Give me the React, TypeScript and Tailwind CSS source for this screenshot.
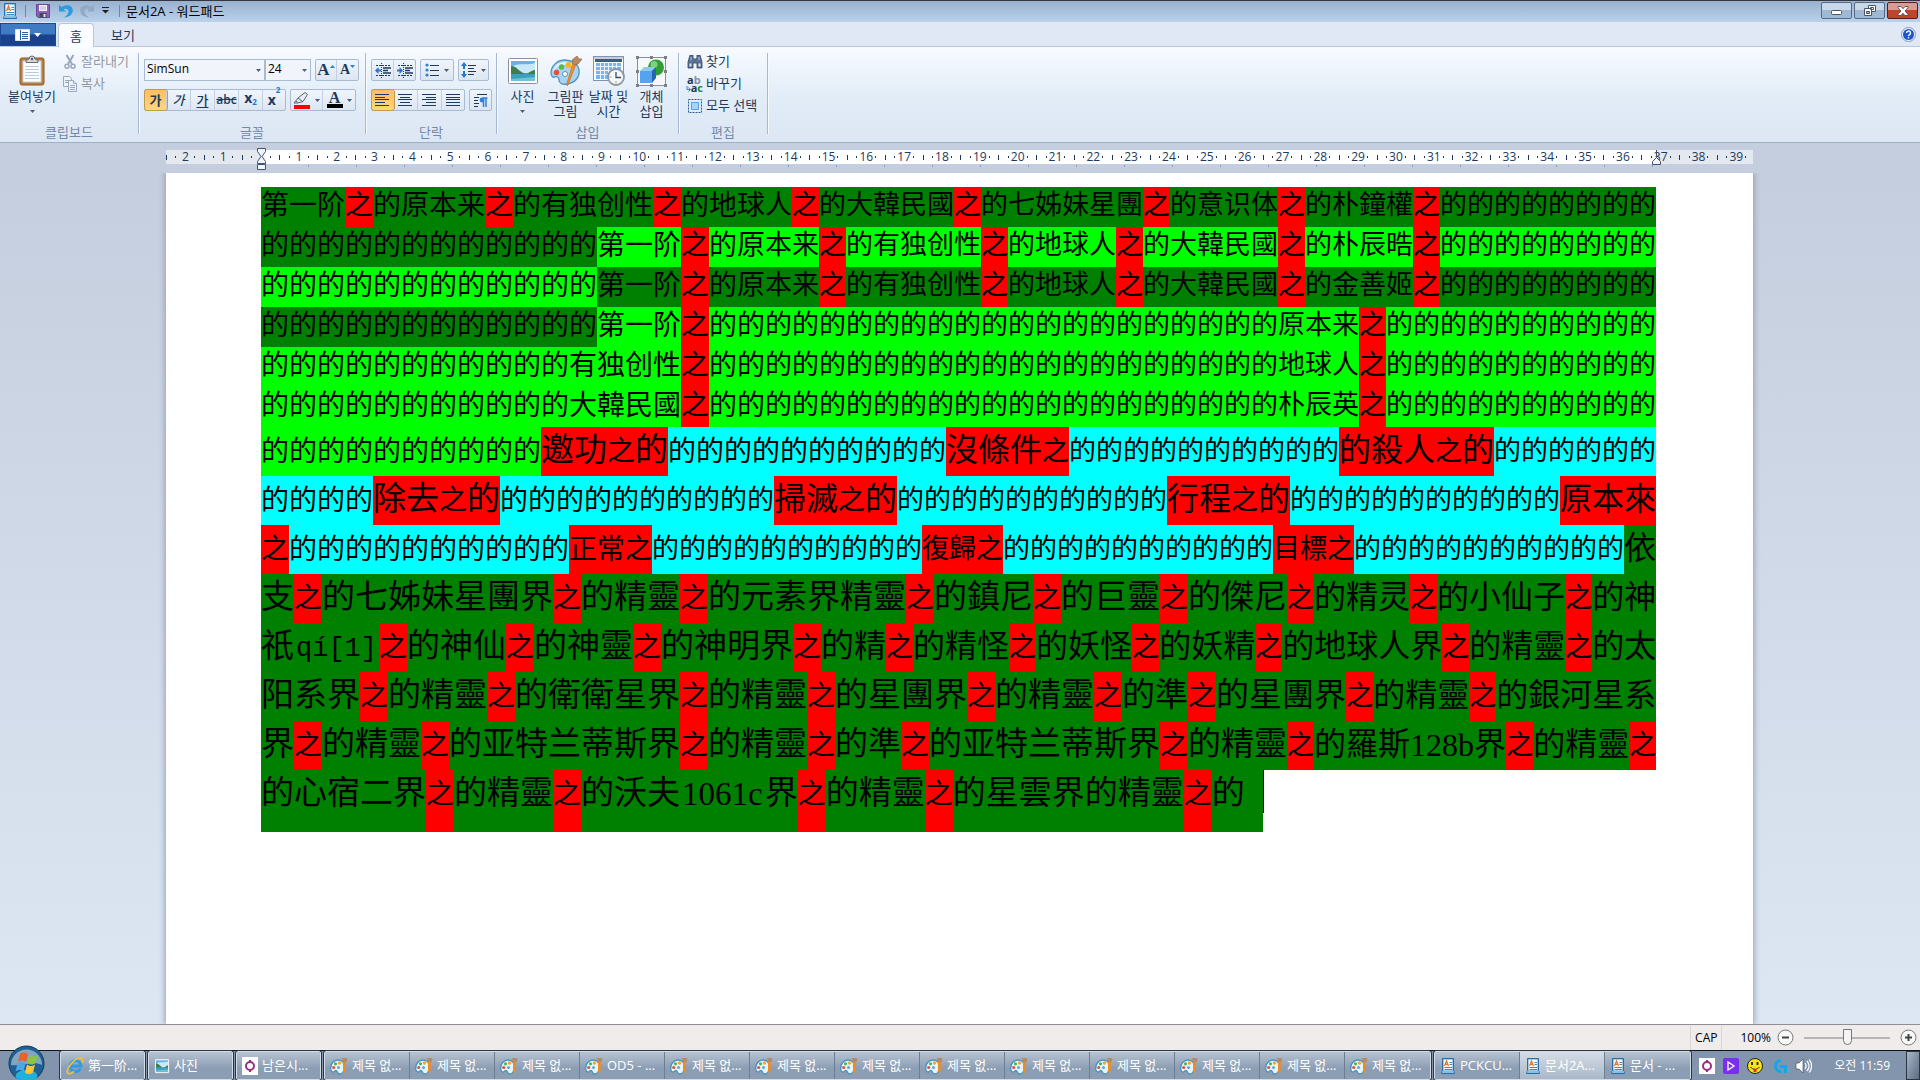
import type { FC, ReactNode } from "react";

type Size = "sm" | "lg";
type Face = "mono" | "serif";

interface Run {
  text: string;
  bg: string;
  size: Size;
  face?: Face;
}

interface Line {
  runs: Run[];
  tall?: boolean;
  last?: boolean;
}

const GREEN = "bg-[#008000]";
const LIME = "bg-[#00ff00]";
const CYAN = "bg-[#00ffff]";
const RED = "bg-[#ff0000]";

const LINE_WIDTH = 1395;

const de = (n: number) => "的".repeat(n);
const sm = (bg: string, text: string): Run => ({ text, bg, size: "sm" });
const lg = (bg: string, text: string): Run => ({ text, bg, size: "lg" });

// every 之 is a small red run, the rest keeps the given colour
const mark = (text: string, bg: string, size: Size = "sm"): Run[] =>
  text
    .split(/(之|qí\[1\]|\d+[a-z])/)
    .filter(Boolean)
    .map((part) => {
      if (part === "之") return sm(RED, part);
      if (part.startsWith("q")) return { text: part, bg, size, face: "mono" as Face };
      if (/^\d/.test(part)) return { text: part, bg, size, face: "serif" as Face };
      return { text: part, bg, size };
    });

const lines: Line[] = [
  { runs: mark(`第一阶之的原本来之的有独创性之的地球人之的大韓民國之的七姊妹星團之的意识体之的朴鐘權之${de(8)}`, GREEN) },
  { runs: [sm(GREEN, de(12)), ...mark(`第一阶之的原本来之的有独创性之的地球人之的大韓民國之的朴辰晧之${de(8)}`, LIME)] },
  { runs: [sm(LIME, de(12)), ...mark(`第一阶之的原本来之的有独创性之的地球人之的大韓民國之的金善姬之${de(8)}`, GREEN)] },
  { runs: [sm(GREEN, de(12)), ...mark(`第一阶之${de(21)}原本来之${de(10)}`, LIME)] },
  { runs: mark(`${de(11)}有独创性之${de(21)}地球人之${de(10)}`, LIME) },
  { runs: mark(`${de(11)}大韓民國之${de(21)}朴辰英之${de(10)}`, LIME) },
  {
    tall: true,
    runs: [
      sm(LIME, de(10)), lg(RED, "邀功"), sm(RED, "之"), lg(RED, "的"),
      sm(CYAN, de(10)), lg(RED, "沒條件"), sm(RED, "之"),
      sm(CYAN, de(10)), lg(RED, "的殺人"), sm(RED, "之"), lg(RED, "的"),
      sm(CYAN, de(6)),
    ],
  },
  {
    tall: true,
    runs: [
      sm(CYAN, de(4)), lg(RED, "除去"), sm(RED, "之"), lg(RED, "的"),
      sm(CYAN, de(10)), lg(RED, "掃滅"), sm(RED, "之"), lg(RED, "的"),
      sm(CYAN, de(10)), lg(RED, "行程"), sm(RED, "之"), lg(RED, "的"),
      sm(CYAN, de(10)), lg(RED, "原本來"),
    ],
  },
  {
    tall: true,
    runs: [
      sm(RED, "之"), sm(CYAN, de(10)), sm(RED, "正常之"), sm(CYAN, de(10)),
      sm(RED, "復歸之"), sm(CYAN, de(10)), sm(RED, "目標之"), sm(CYAN, de(10)), lg(GREEN, "依"),
    ],
  },
  { tall: true, runs: mark("支之的七姊妹星團界之的精靈之的元素界精靈之的鎮尼之的巨靈之的傑尼之的精灵之的小仙子之的神", GREEN, "lg") },
  { tall: true, runs: mark("祇qí[1]之的神仙之的神靈之的神明界之的精之的精怪之的妖怪之的妖精之的地球人界之的精靈之的太", GREEN, "lg") },
  { tall: true, runs: mark("阳系界之的精靈之的衛衛星界之的精靈之的星團界之的精靈之的準之的星團界之的精靈之的銀河星系", GREEN, "lg") },
  { tall: true, runs: mark("界之的精靈之的亚特兰蒂斯界之的精靈之的準之的亚特兰蒂斯界之的精靈之的羅斯128b界之的精靈之", GREEN, "lg") },
  { tall: true, last: true, runs: mark("的心宿二界之的精靈之的沃夫1061c界之的精靈之的星雲界的精靈之的", GREEN, "lg") },
];

const cellWidth = (run: Run) => (run.face ? 16 : run.size === "lg" ? 32 : 27);

// spare pixels of a justified line go one by one to its leading characters
const justify = (line: Line) => {
  const used = line.runs.reduce((sum, run) => sum + run.text.length * cellWidth(run), 0);
  let spare = line.last ? Infinity : Math.max(0, LINE_WIDTH - used);
  const out: (Run & { wide: boolean })[] = [];
  for (const run of line.runs) {
    const n = run.text.length;
    if (spare >= n) out.push({ ...run, wide: true });
    else if (spare <= 0) out.push({ ...run, wide: false });
    else if (run.face) out.push({ ...run, wide: true });
    else {
      out.push({ ...run, text: run.text.slice(0, spare), wide: true });
      out.push({ ...run, text: run.text.slice(spare), wide: false });
    }
    spare -= n;
  }
  return out;
};

const runClass = (run: Run & { wide: boolean }, tall?: boolean) => {
  const drop = tall && run.size === "sm" ? "pt-0.5" : "";
  if (run.face === "mono") return `${run.bg} px-0.5 pt-1.5 font-['Liberation_Mono',monospace] text-[27px]`;
  if (run.face === "serif") {
    return `${run.bg} pt-1 font-['Liberation_Serif',serif] ${run.wide ? "px-0.5 text-[33px]" : "text-[32px]"}`;
  }
  if (run.size === "lg") return `${run.bg} ${run.wide ? "text-[33px]" : "text-[32px]"}`;
  return `${run.bg} ${drop} ${run.wide ? "text-[28px]" : "text-[27px]"}`;
};

const DocumentText: FC = () => (
  <div className="font-['Noto_Sans_CJK_SC',sans-serif] text-black">
    {lines.map((line, i) => (
      <p
        key={i}
        className={[
          "flex whitespace-nowrap",
          line.last ? "h-[62px] leading-10" : line.tall ? "h-[49px] leading-10" : "h-10 leading-8",
        ].join(" ")}
      >
        {justify(line).map((run, j) => (
          <span key={j} className={`shrink-0 ${line.last ? "" : "last:grow"} ${runClass(run, line.tall)}`}>
            {run.text}
          </span>
        ))}
        {line.last && (
          <>
            <span className="w-[18px] bg-[#008000]" />
            <span className="h-[43px] w-px bg-black" />
          </>
        )}
      </p>
    ))}
  </div>
);

/* ---------- icons ---------- */

const Caret: FC<{ className?: string }> = ({ className = "" }) => (
  <svg width="5" height="3" viewBox="0 0 5 3" className={`shrink-0 ${className}`}>
    <path d="M0 0h5L2.5 3z" fill="#4a5f80" />
  </svg>
);

const WordpadIcon: FC = () => (
  <svg width="16" height="16" viewBox="0 0 16 16" className="shrink-0">
    <path d="M2.5.5h11v12l1 3h-13l1-3z" fill="#4d9fd6" stroke="#2b6ca3" />
    <path d="M3.5 1.5h9v11h-9z" fill="#f4faff" />
    <path d="M4.500 8L6.500 3l2 5M5.200 6.300h2.600" stroke="#e8772a" strokeWidth="1.300" fill="none" />
    <path d="M9.500 4.500h2.500M9.500 6.500h2.500M4.500 9.500h7.500M4.500 11.500h7.500" stroke="#3f86c4" />
    <path d="M2 14h12" stroke="#bfe0f5" />
  </svg>
);

const SaveIcon: FC = () => (
  <svg width="14" height="14" viewBox="0 0 14 14">
    <path d="M.5.5h13v13H2L.5 12z" fill="#8c62b8" stroke="#6a4596" />
    <path d="M3 1h8v6H3z" fill="#f5f2fb" />
    <path d="M4 3h6M4 5h6" stroke="#b9a9d4" />
    <path d="M3.500 9h7v4.500h-7z" fill="#4a4560" />
    <path d="M7.500 10h2v3h-2z" fill="#e7e2f0" />
  </svg>
);

const UndoIcon: FC<{ color: string; flip?: boolean }> = ({ color, flip }) => (
  <svg width="14" height="14" viewBox="0 0 14 14" className={flip ? "-scale-x-100" : ""}>
    <path d="M0 .5v7h7L4.700 5.200C7.500 4 9.500 5.300 9.500 7.500c0 2-1.500 4-4.500 6 5.500-.5 8.800-3.300 8.800-7.200C13.800 1.500 7.500-.5 2.600 3z" fill={color} />
  </svg>
);

const PasteIcon: FC = () => (
  <svg width="26" height="32" viewBox="0 0 26 32">
    <rect x="1" y="3" width="24" height="27" rx="2" fill="#b97f3f" stroke="#8d5b27" />
    <path d="M4 6h18v21H4z" fill="#fbfdff" stroke="#c9d3de" />
    <path d="M6 11.500h14M6 14.500h14M6 17.500h14M6 20.500h14M6 23.500h14" stroke="#b8cbe2" />
    <path d="M7 7.500V5.500l3-1.500a3 3 0 0 1 6 0l3 1.500v2z" fill="#d3d8de" stroke="#666d76" />
    <circle cx="13" cy="4" r="1.200" fill="#555c66" />
  </svg>
);

const CutIcon: FC = () => (
  <svg width="14" height="16" viewBox="0 0 14 16" fill="none" stroke="#9aa7ba" strokeWidth="1.500">
    <path d="M3.500 1l5.500 9M10.500 1L5 10" strokeWidth="2" />
    <circle cx="4" cy="12.300" r="2" />
    <circle cx="10" cy="12.300" r="2" />
  </svg>
);

const CopyIcon: FC = () => (
  <svg width="16" height="16" viewBox="0 0 16 16" fill="#eef3f9" stroke="#9aa9bf">
    <path d="M1.500.5h6l2 2v8h-8z" />
    <path d="M3 4.500h4M3 6.500h3" />
    <path d="M6.500 4.500h5l3 3v8h-8z" />
    <path d="M11.500 4.500v3h3M8 9.500h5M8 11.500h5M8 13.500h5" />
  </svg>
);

const IndentIcon: FC<{ out?: boolean }> = ({ out }) => (
  <svg width="16" height="15" viewBox="0 0 16 15" fill="none" stroke="#1e395b">
    <path d="M1 2.500h15M1 12.500h15" strokeDasharray="2 1" />
    <path d="M6.500 0v15" strokeDasharray="1 1" />
    <path d="M8 5h8M8 7.500h5M8 10h8" strokeWidth="1.500" />
    {out ? (
      <path d="M0 7.500L3.500 4v2.500H6v2H3.500V11z" fill="#2176d6" stroke="none" />
    ) : (
      <path d="M6 7.500L2.500 4v2.500H0v2h2.500V11z" fill="#2176d6" stroke="none" />
    )}
  </svg>
);

const BulletsIcon: FC = () => (
  <svg width="15" height="14" viewBox="0 0 15 14">
    <g fill="#2f7fd8"><circle cx="2" cy="2" r="1.600" /><circle cx="2" cy="7" r="1.600" /><circle cx="2" cy="12" r="1.600" /></g>
    <path d="M5 2.500h9M5 7.500h9M5 12.500h9" stroke="#1e395b" />
  </svg>
);

const SpacingIcon: FC = () => (
  <svg width="16" height="16" viewBox="0 0 16 16">
    <path d="M3 0l3 4H4v3H2V4H0zM3 16l3-4H4V9H2v3H0z" fill="#2176d6" />
    <path d="M7 3.500h8M7 6.500h6M7 9.500h8M7 12.500h6" stroke="#1e395b" />
  </svg>
);

const AlignIcon: FC<{ d: string }> = ({ d }) => (
  <svg width="15" height="12" viewBox="0 0 15 12">
    <path d={d} stroke="#1e395b" />
  </svg>
);

const ParagraphIcon: FC = () => (
  <svg width="16" height="15" viewBox="0 0 16 15" fill="none" stroke="#1e395b">
    <path d="M4 1.500h10M1 4.500h5M1 7.500h4M1 10.500h5M1 13.500h4" />
    <path d="M10.500 14V5.500M13 14V5M14.500 5H9.500" stroke="#2f7fd8" strokeWidth="1.500" />
    <circle cx="9" cy="7" r="2.400" fill="#2f7fd8" stroke="none" />
  </svg>
);

const PenIcon: FC = () => (
  <svg width="18" height="17" viewBox="0 0 18 17">
    <path d="M1 11l4-5 7-5.500 2.500 2L10 9.500 4.500 11z" fill="#e9edf3" stroke="#53637b" />
    <path d="M5 6l4.500 3.500M3 9l2 1.500" stroke="#53637b" />
    <path d="M1 13h16v4H1z" fill="#f00" />
  </svg>
);

const PictureIcon: FC<{ className?: string }> = ({ className = "h-7 w-8" }) => (
  <svg viewBox="0 0 32 28" className={className} preserveAspectRatio="none">
    <rect x="1.500" y="1.500" width="29" height="25" rx="1" fill="#fff" stroke="#8b9199" />
    <path d="M4 4h24v20H4z" fill="#65b2e8" />
    <path d="M4 10c8-5 14-1 24-4v10H4z" fill="#c9e9fb" />
    <path d="M4 9c6 0 9 7 15 8H4zM28 13c-4 0-6 4-11 4h11z" fill="#3f7d4a" />
    <path d="M4 17h24v7H4z" fill="#3aa0c0" />
    <path d="M4 22l24-2v4H4z" fill="#6fc3d3" />
  </svg>
);

const PaletteIcon: FC<{ className?: string }> = ({ className = "h-8 w-8" }) => (
  <svg viewBox="0 0 32 32" className={className}>
    <path d="M15 5C7 5 1 11 1 18c0 3 2 5 4 4s4 0 4 3 3 5 8 4c8-1 13-7 12-14C28 9 22 5 15 5z" fill="#a9d3ee" stroke="#4f93c4" strokeWidth="1.300" />
    <path d="M15 7C8 7 3 12 3 17c5-8 14-9 23-5-2-3-6-5-11-5z" fill="#e2f3fd" />
    <circle cx="6.500" cy="17.500" r="2.700" fill="#e0523a" />
    <circle cx="11.500" cy="12" r="2.700" fill="#58b947" />
    <circle cx="18.500" cy="10" r="3" fill="#f6b426" />
    <circle cx="15" cy="19" r="2.500" fill="#fff" stroke="#4f93c4" />
    <path d="M26 9L18 30l-1 1v-3L23 8z" fill="#f2902f" stroke="#c36514" strokeWidth=".6" />
    <path d="M23 9l-1-4 5-4 2 3 3 0-4 5-2 1z" fill="#b98a62" stroke="#8c5f3b" strokeWidth=".6" />
  </svg>
);

// small palette of the taskbar, with bolder blobs and an upright brush
const PaintIcon: FC = () => (
  <svg width="18" height="18" viewBox="0 0 18 18" className="shrink-0">
    <path d="M8 3C3.500 3 .7 7 .7 11c0 2.500 1 4 2.500 4s1.500-2 3-1.500 1 3.500 3.500 3.500 4.500-3 4.500-7.500S12 3 8 3z" fill="#e6f4fc" stroke="#4590c4" strokeWidth="1.300" />
    <circle cx="3.700" cy="10.500" r="1.600" fill="#e0523a" />
    <circle cx="5.500" cy="6.800" r="1.600" fill="#4fb443" />
    <circle cx="9.500" cy="6" r="1.700" fill="#f6a820" />
    <circle cx="8.500" cy="10.500" r="1.500" fill="#5ba9dc" />
    <path d="M13 5h2.800l-.3 9-1.500 3-1-3z" fill="#f28a1e" />
    <path d="M12.500 5V2.500L11.500 1h5l1 1-1 3z" fill="#b98a62" />
  </svg>
);

const CalendarIcon: FC = () => (
  <svg width="32" height="32" viewBox="0 0 32 32">
    <rect x=".5" y="1.500" width="30" height="24" fill="#fff" stroke="#8493aa" />
    <path d="M1 2h29v2H1z" fill="#c9cdd3" />
    <path d="M2 4h27v3H2z" fill="#3a5c92" />
    <path d="M3 8h25v16H3z" fill="#76b5f2" />
    <path d="M3 11.500h25M3 15.500h25M3 19.500h25M7.500 8v16M11.500 8v16M15.500 8v16M19.500 8v16M23.500 8v16" stroke="#e9f4ff" />
    <circle cx="23" cy="22" r="8" fill="#f5f7f9" stroke="#8d959e" strokeWidth="1.800" />
    <path d="M23 17v5.500h5" stroke="#3b4d66" strokeWidth="1.300" fill="none" />
    <path d="M16.500 22h2M23 28v-2" stroke="#8d959e" />
  </svg>
);

const ObjectIcon: FC = () => (
  <svg width="31" height="31" viewBox="0 0 31 31">
    <path d="M1.500 1.500h28v28h-28z" fill="#f7f8fa" stroke="#8b9097" />
    <circle cx="20" cy="11.500" r="8" fill="#2f9e34" />
    <circle cx="18" cy="8.500" r="3.500" fill="#7fd07f" />
    <path d="M4 15h12v12H4z" fill="#55a3ee" />
    <path d="M4 15l4-4h12l-4 4z" fill="#8cc6fb" />
    <path d="M16 15l4-4v11l-4 5z" fill="#2467b4" />
    <path d="M0 0h3v3H0zM14 0h3v3h-3zM28 0h3v3h-3zM0 14h3v3H0zM28 14h3v3h-3zM0 28h3v3H0zM14 28h3v3h-3zM28 28h3v3h-3z" fill="#7b8087" />
  </svg>
);

const FindIcon: FC = () => (
  <svg width="16" height="14" viewBox="0 0 16 14">
    <path d="M3 0h3v3l1 1h2l1-1V0h3l2 7v6h-5V8H6v5H1V7z" fill="#5c7396" stroke="#2c4266" strokeWidth=".8" />
    <path d="M2.500 8.500h2v3h-2zM11.500 8.500h2v3h-2z" fill="#dce7f5" />
    <path d="M4 2v3M12 2v3" stroke="#b7c8e0" />
  </svg>
);

const ReplaceIcon: FC = () => (
  <span className="relative block h-4 w-4 font-['Open_Sans',sans-serif] text-[11px] leading-2 font-bold">
    <span className="absolute top-0 left-0 text-[#1e395b]">a<span className="text-[#8290a5]">b</span></span>
    <span className="absolute right-0 bottom-0 text-[#1e395b]">a<span className="text-[#1c8a2a]">c</span></span>
    <svg width="5" height="6" viewBox="0 0 5 6" className="absolute bottom-0 -left-px">
      <path d="M1 0v3.500h3M2.500 1.500l2 2-2 2" stroke="#2f7fd8" fill="none" />
    </svg>
  </span>
);

const SelectAllIcon: FC = () => (
  <svg width="14" height="14" viewBox="0 0 14 14">
    <path d="M.5.5h13v13H.5z" fill="none" stroke="#2c5d9a" strokeDasharray="2 1" />
    <path d="M3.500 3.500h7v7h-7z" fill="#a9d2fb" stroke="#5ba0e4" />
  </svg>
);

const IeIcon: FC = () => (
  <svg width="18" height="18" viewBox="0 0 18 18" fill="none" className="shrink-0">
    <path d="M14.500 11.500A5.500 5.500 0 1 1 15 9H5" stroke="#2f9be8" strokeWidth="2.800" />
    <path d="M2 16.500C-1 13 8 1 14.500 1c3 0 2.500 3 1.500 5M2 16.500c1.500 1 4-.5 6-2" stroke="#f3c22f" strokeWidth="1.600" />
  </svg>
);

const RingIcon: FC<{ height: number }> = ({ height }) => (
  <svg width="16" height={height} viewBox="0 0 16 16" className="shrink-0 bg-white">
    <circle cx="8" cy="8" r="4" fill="none" stroke="#9a2f7f" strokeWidth="2" />
    <path d="M8 2v2M8 12v2" stroke="#9a2f7f" strokeWidth="2" />
  </svg>
);

/* ---------- ribbon ---------- */

const Group: FC<{ label: string; className: string; pad: string; children: ReactNode }> = ({ label, className, pad, children }) => (
  <section className="flex">
    <div className={`flex flex-col ${className}`}>
      <div className={`flex-1 ${pad}`}>{children}</div>
      <h2 className="h-5 text-center text-[13px] leading-5 text-[#7488a8]">{label}</h2>
    </div>
    <div className="mt-1.5 h-[81px] w-px bg-[#a8b8d0] shadow-[1px_0_0_#f6fafe]" />
  </section>
);

const Cluster: FC<{ children: ReactNode }> = ({ children }) => (
  <div className="flex h-[22px] divide-x divide-[#c3d0e2] rounded-xs border border-[#a9bbd3] bg-gradient-to-b from-[#f0f5fb] to-[#dce6f2]">
    {children}
  </div>
);

const Tool: FC<{ label: string; active?: boolean; className?: string; children: ReactNode }> = ({
  label,
  active,
  className = "w-6",
  children,
}) => (
  <button
    type="button"
    aria-label={label}
    className={[
      "flex items-center justify-center gap-1 leading-5",
      className,
      active ? "rounded-xs bg-gradient-to-b from-[#fbbf62] to-[#ffd77a] outline outline-[#c29b4a]" : "",
    ].join(" ")}
  >
    {children}
  </button>
);

const BigTool: FC<{ icon: ReactNode; lines: string[]; menu?: boolean; className?: string }> = ({
  icon,
  lines: labels,
  menu,
  className = "w-[43px]",
}) => (
  <button type="button" className={`flex flex-col items-center pt-1.5 text-[13px] leading-[15px] whitespace-nowrap ${className}`}>
    <span className="flex h-9 items-center">{icon}</span>
    {labels.map((l) => (
      <span key={l}>{l}</span>
    ))}
    {menu && <Caret className="mt-1.5" />}
  </button>
);

const SmallTool: FC<{ icon: ReactNode; label: string; disabled?: boolean }> = ({ icon, label, disabled }) => (
  <button
    type="button"
    disabled={disabled}
    className={`flex h-[22px] items-center gap-[3px] text-[13px] whitespace-nowrap ${disabled ? "text-[#9299a5]" : ""}`}
  >
    <span className="flex w-4 justify-center">{icon}</span>
    {label}
  </button>
);

const Combo: FC<{ label: string; value: string; className: string }> = ({ label, value, className }) => (
  <div className={`relative ${className}`}>
    <select aria-label={label} className="block h-[22px] w-full appearance-none border border-[#a9bbd3] bg-[#f1f5fb] pb-0.5 pl-0.5 text-xs text-black">
      <option>{value}</option>
    </select>
    <Caret className="pointer-events-none absolute top-[10px] right-1" />
  </div>
);

const Ribbon: FC = () => (
  <div className="flex h-24 shrink-0 border-b border-[#9db0cc] bg-gradient-to-b from-[#f8fbff] via-[#e3edf8] to-[#dce7f4]">
    <Group label="클립보드" className="w-[138px]" pad="pl-1">
      <div className="flex gap-0.5">
        <BigTool icon={<PasteIcon />} lines={["붙여넣기"]} menu className="w-14" />
        <div className="pt-1">
          <SmallTool icon={<CutIcon />} label="잘라내기" disabled />
          <SmallTool icon={<CopyIcon />} label="복사" disabled />
        </div>
      </div>
    </Group>

    <Group label="글꼴" className="w-[226px]" pad="pl-[5px]">
      <div className="flex items-center gap-1 pt-3">
        <div className="flex">
          <Combo label="글꼴 패밀리" value="SimSun" className="w-[121px]" />
          <Combo label="글꼴 크기" value="24" className="w-[46px]" />
        </div>
        <Cluster>
          <Tool label="글꼴 크기 늘리기" className="w-[21px]">
            <span className="font-['Liberation_Serif',serif] text-[17px] font-bold">A</span>
            <svg width="5" height="3" viewBox="0 0 5 3" className="mb-2 -ml-1"><path d="M0 3h5L2.500 0z" fill="#2f7fd8" /></svg>
          </Tool>
          <Tool label="글꼴 크기 줄이기" className="w-[21px]">
            <span className="font-['Liberation_Serif',serif] text-sm font-bold">A</span>
            <svg width="5" height="3" viewBox="0 0 5 3" className="mb-2 -ml-1"><path d="M0 0h5L2.500 3z" fill="#2f7fd8" /></svg>
          </Tool>
        </Cluster>
      </div>
      <div className="flex gap-1 pt-2">
        <Cluster>
          <Tool label="굵게" active className="w-[22px]"><b className="text-[13px]">가</b></Tool>
          <Tool label="기울임꼴"><i className="text-[13px] font-medium">가</i></Tool>
          <Tool label="밑줄"><span className="text-[13px] font-medium underline underline-offset-2">가</span></Tool>
          <Tool label="취소선"><span className="text-xs font-semibold line-through">abc</span></Tool>
          <Tool label="아래 첨자">
            <span className="flex text-sm font-bold"><span className="-mt-1">x</span><span className="mt-1 text-[8px] text-[#2176d6]">2</span></span>
          </Tool>
          <Tool label="위 첨자" className="w-[22px]">
            <span className="flex text-sm font-bold">x<span className="-mt-1.5 text-[8px] text-[#2176d6]">2</span></span>
          </Tool>
        </Cluster>
        <Cluster>
          <Tool label="텍스트 강조 색" className="w-8"><PenIcon /><Caret /></Tool>
          <Tool label="텍스트 색" className="w-8">
            <span className="flex w-4 flex-col items-center border-b-4 border-black font-['Liberation_Serif',serif] text-base leading-3 font-bold">A</span>
            <Caret />
          </Tool>
        </Cluster>
      </div>
    </Group>

    <Group label="단락" className="w-[130px]" pad="pl-[5px]">
      <div className="flex gap-1 pt-3">
        <Cluster>
          <Tool label="내어쓰기" className="w-[22px]"><IndentIcon out /></Tool>
          <Tool label="들여쓰기" className="w-[21px]"><IndentIcon /></Tool>
        </Cluster>
        <Cluster>
          <Tool label="목록 시작" className="w-8"><BulletsIcon /><Caret /></Tool>
        </Cluster>
        <Cluster>
          <Tool label="줄 간격" className="w-[29px]"><SpacingIcon /><Caret /></Tool>
        </Cluster>
      </div>
      <div className="flex gap-1 pt-2">
        <Cluster>
          <Tool label="왼쪽 맞춤" active className="w-[22px]"><AlignIcon d="M0 .5h14M0 3.500h10M0 5.500h14M0 8.500h10M0 11.500h14" /></Tool>
          <Tool label="가운데 맞춤"><AlignIcon d="M0 .5h14M2 3.500h10M0 5.500h14M2 8.500h10M0 11.500h14" /></Tool>
          <Tool label="오른쪽 맞춤"><AlignIcon d="M0 .5h14M4 3.500h10M0 5.500h14M4 8.500h10M0 11.500h14" /></Tool>
          <Tool label="양쪽 맞춤" className="w-[22px]"><AlignIcon d="M0 .5h14M0 3.500h14M0 5.500h14M0 8.500h14M0 11.500h14" /></Tool>
        </Cluster>
        <Cluster>
          <Tool label="단락" className="w-[21px]"><ParagraphIcon /></Tool>
        </Cluster>
      </div>
    </Group>

    <Group label="삽입" className="w-[181px]" pad="pl-1">
      <div className="flex">
        <BigTool icon={<PictureIcon />} lines={["사진"]} menu />
        <BigTool icon={<PaletteIcon />} lines={["그림판", "그림"]} />
        <BigTool icon={<CalendarIcon />} lines={["날짜 및", "시간"]} />
        <BigTool icon={<ObjectIcon />} lines={["개체", "삽입"]} />
      </div>
    </Group>

    <Group label="편집" className="w-[88px]" pad="pl-2">
      <div className="pt-1">
        <SmallTool icon={<FindIcon />} label="찾기" />
        <SmallTool icon={<ReplaceIcon />} label="바꾸기" />
        <SmallTool icon={<SelectAllIcon />} label="모두 선택" />
      </div>
    </Group>
  </div>
);

/* ---------- window chrome ---------- */

const TitleBar: FC = () => (
  <header className="flex h-[22px] shrink-0 items-center justify-between border-t border-[#33363f] bg-gradient-to-b from-[#98b1cf] to-[#bad2ea] pb-0.5">
    <div className="flex items-center pl-0.5">
      <WordpadIcon />
      <span className="ml-[7px] h-3 w-px bg-[#6f86a5]" />
      <button type="button" aria-label="저장" className="ml-2.5"><SaveIcon /></button>
      <button type="button" aria-label="실행 취소" className="ml-[9px]"><UndoIcon color="#2b9be0" /></button>
      <button type="button" aria-label="다시 실행" className="ml-[7px]"><UndoIcon color="#93a8c4" flip /></button>
      <button type="button" aria-label="빠른 실행 도구 모음 사용자 지정" className="ml-2">
        <svg width="7" height="7" viewBox="0 0 7 7"><path d="M0 .5h7" stroke="#222" /><path d="M0 3h7L3.500 6.500z" fill="#222" /></svg>
      </button>
      <span className="ml-[10px] h-3 w-px bg-[#6f86a5]" />
      <h1 className="ml-1.5 text-[13px] leading-5 text-black">문서2A - 워드패드</h1>
    </div>
    <div className="flex gap-0.5 pr-0.5">
      <button type="button" aria-label="최소화" className="flex h-[17px] w-[31px] items-center justify-center rounded-xs border border-[#566a86] bg-gradient-to-b from-[#c8d8ea] from-50% to-[#9fb9d5] to-50%">
        <svg width="11" height="5" viewBox="0 0 11 5" className="mt-1"><rect x=".5" y=".5" width="10" height="4" rx="1" fill="#fff" stroke="#4a5468" /></svg>
      </button>
      <button type="button" aria-label="이전 크기로 복원" className="flex h-[17px] w-[31px] items-center justify-center rounded-xs border border-[#566a86] bg-gradient-to-b from-[#c8d8ea] from-50% to-[#9fb9d5] to-50%">
        <svg width="12" height="11" viewBox="0 0 12 11" fill="#fff" stroke="#4a5468"><path d="M4.500.5h7v6h-7z" /><path d="M6.500 2.500h3v2h-3zM.5 3.500h7v7h-7z" /><path d="M2.500 6.500h3v2h-3z" fill="#9fb9d5" /></svg>
      </button>
      <button type="button" aria-label="닫기" className="flex h-[17px] w-[31px] items-center justify-center rounded-xs border border-[#5b1a22] bg-gradient-to-b from-[#dd9a90] from-50% to-[#c0432c] to-50%">
        <svg width="12" height="10" viewBox="0 0 12 10"><path d="M1 .5h3l2 2.200L8 .5h3v1.200L8 5l3 3.300v1.200H8L6 7.300 4 9.500H1V8.300L4 5 1 1.700z" fill="#fff" stroke="#4d4a5a" strokeWidth=".9" /></svg>
      </button>
    </div>
  </header>
);

const TabBar: FC = () => (
  <nav className="flex h-[25px] shrink-0 items-stretch border-b border-[#b7c6de] bg-[#dfe8f4] pt-px text-[13px] leading-[22px]">
    <button type="button" aria-label="워드패드" className="flex w-14 items-center justify-center gap-1 border border-[#1d4a94] bg-gradient-to-b from-[#3f7cc4] from-45% to-[#1a418c] to-55%">
      <svg width="15" height="12" viewBox="0 0 15 12"><path d="M.5.5h14v11H.5z" fill="#fff" stroke="#d6e4f6" /><path d="M5.500 1v10M7 3.500h6M7 5.500h6M7 7.500h6M7 9.500h6" stroke="#2a5ba5" /></svg>
      <svg width="7" height="4" viewBox="0 0 7 4"><path d="M0 0h7L3.500 4z" fill="#fff" /></svg>
    </button>
    <button type="button" className="-mb-px ml-0.5 w-9 rounded-t-sm border border-b-0 border-[#b7c6de] bg-[#fafcff]">홈</button>
    <button type="button" className="ml-[13px] px-1">보기</button>
    <button type="button" aria-label="도움말" className="mr-1 ml-auto flex items-center">
      <svg width="15" height="15" viewBox="0 0 15 15">
        <circle cx="7.500" cy="7.500" r="7" fill="#e9f1fb" stroke="#7d9bc9" />
        <circle cx="7.500" cy="7.500" r="5.500" fill="#1f55cf" />
        <path d="M5.500 6a2 2 0 1 1 2.800 1.900c-.7.300-.8.500-.8 1.300M7.500 10.300v1.200" stroke="#fff" strokeWidth="1.400" fill="none" />
      </svg>
    </button>
  </nav>
);

const ticks = Array.from({ length: 42 }, (_, i) => i - 2);

const Ruler: FC = () => (
  <div className="h-[30px] shrink-0 bg-[#c5cede] pt-[7px] pr-[167px] pl-[166px]">
    <div className="relative h-3.5 bg-white">
      <div className="absolute inset-y-0 left-0 w-[95px] bg-[#e4e8ef]" />
      <div className="absolute inset-y-0 right-0 w-[97px] bg-[#e4e8ef]" />
      <div className="relative -mr-0.5 flex h-full">
        {ticks.map((n) => (
          <div key={n} className="flex flex-1 items-center justify-between text-[#1e395b]">
            <span className="h-[5px] w-px bg-[#1e395b]" />
            <span className="h-0.5 w-px bg-[#1e395b]" />
            <span className="flex w-px justify-center text-xs leading-3.5">{n === 0 ? "" : Math.abs(n)}</span>
            <span className="h-0.5 w-px bg-[#1e395b]" />
            <span />
          </div>
        ))}
      </div>
      <svg width="9" height="23" viewBox="0 0 9 23" className="absolute -top-0.5 left-[91px]" fill="#f3f6fa" stroke="#3d5677">
        <path d="M.5.5h8v3L5 8.500l3.500 5v2h-8v-2l3.500-5-3.500-5z" />
        <path d="M.5 16.500h8v5h-8z" />
      </svg>
      <svg width="9" height="15" viewBox="0 0 9 15" className="absolute top-0 right-[92px]" fill="#f3f6fa" stroke="#3d5677">
        <path d="M4.500 0v8" />
        <path d="M4.500 7.500l4 4v3h-8v-3z" />
      </svg>
    </div>
    <div className="flex pl-[95px]">
      {Array.from({ length: 29 }, (_, i) => (
        <span key={i} className="mt-px h-0.5 w-12 border-r border-[#8b9bb4]" />
      ))}
    </div>
  </div>
);

const StatusBar: FC = () => (
  <footer className="flex h-[26px] shrink-0 items-center justify-end border-t border-[#8d8f94] bg-[#f0eceb] pr-[3px] text-xs text-black">
    <span className="border-x border-[#d8d5d4] px-1 leading-6">CAP</span>
    <span className="ml-[18px]">100%</span>
    <button type="button" aria-label="축소" className="ml-1.5">
      <svg width="17" height="17" viewBox="0 0 17 17"><circle cx="8.500" cy="8.500" r="7.500" fill="#f8f8f8" stroke="#777" /><path d="M5 8.500h7" stroke="#444" strokeWidth="2" /></svg>
    </button>
    <input
      type="range"
      aria-label="확대/축소"
      defaultValue={50}
      className="mx-2.5 h-5 w-[86px] appearance-none bg-transparent [&::-webkit-slider-runnable-track]:h-0.5 [&::-webkit-slider-runnable-track]:bg-[#b5b5b5] [&::-webkit-slider-thumb]:-mt-2 [&::-webkit-slider-thumb]:h-4 [&::-webkit-slider-thumb]:w-[9px] [&::-webkit-slider-thumb]:appearance-none [&::-webkit-slider-thumb]:rounded-b-full [&::-webkit-slider-thumb]:border [&::-webkit-slider-thumb]:border-[#777] [&::-webkit-slider-thumb]:bg-[#f4f4f4]"
    />
    <button type="button" aria-label="확대">
      <svg width="17" height="17" viewBox="0 0 17 17"><circle cx="8.500" cy="8.500" r="7.500" fill="#f8f8f8" stroke="#777" /><path d="M5 8.500h7M8.500 5v7" stroke="#444" strokeWidth="2" /></svg>
    </button>
  </footer>
);

const TaskButton: FC<{ icon: ReactNode; label: string; active?: boolean; single?: boolean }> = ({ icon, label, active, single }) => (
  <button
    type="button"
    className={[
      "flex items-center gap-1 pl-[5px] whitespace-nowrap",
      single ? "w-[83px]" : "w-[85px]",
      active ? "bg-gradient-to-b from-[#d5dce5] to-[#a9b8c9]" : "bg-gradient-to-b from-[#b7c3d1] to-[#8c9eb4] to-60%",
    ].join(" ")}
  >
    {icon}
    <span>{label}</span>
  </button>
);

const TaskGroup: FC<{ children: ReactNode }> = ({ children }) => (
  <div className="flex shrink-0 divide-x divide-[#6d7e94] rounded-xs border border-[#d3dbe4] outline outline-[#2b3645]">{children}</div>
);

const paintTitles = ["제목 없...", "제목 없...", "제목 없...", "OD5 - ...", ...Array(9).fill("제목 없...")];

const Taskbar: FC = () => (
  <div className="relative flex h-[30px] shrink-0 gap-[3px] border-t border-[#10141b] bg-[#8295ad] pl-[60px] text-[13px] text-white">
    <button type="button" aria-label="시작" className="absolute -top-1.5 left-2 h-9 w-[37px] overflow-hidden">
      <svg width="37" height="37" viewBox="0 0 37 37">
        <circle cx="18.500" cy="18.500" r="17.500" fill="#1f5f92" stroke="#153a5c" />
        <path d="M3 20a15.500 15.500 0 0 1 31 0c-8-5-22 2-31 0z" fill="#a6bccd" opacity=".75" />
        <ellipse cx="18.500" cy="31" rx="11" ry="6" fill="#25c4f2" opacity=".8" />
        <path d="M12 9c3-2 5-2 8 0l-2 8c-3-2-5-2-8 0z" fill="#e9622a" />
        <path d="M21.500 10c3 2 5 2 8 0l-2 8c-3 2-5 2-8 0z" fill="#8cc63f" />
        <path d="M9.500 18.500c3-2 5-2 8 0l-2 8c-3-2-5-2-8 0z" fill="#4ba7e8" />
        <path d="M19 19.500c3 2 5 2 8 0l-2 8c-3 2-5 2-8 0z" fill="#fdc82f" />
      </svg>
    </button>
    <TaskGroup><TaskButton single icon={<IeIcon />} label="第一阶..." /></TaskGroup>
    <TaskGroup><TaskButton single icon={<PictureIcon className="h-4 w-4 shrink-0" />} label="사진" /></TaskGroup>
    <TaskGroup><TaskButton single icon={<RingIcon height={18} />} label="남은시..." /></TaskGroup>
    <TaskGroup>
      {paintTitles.map((title, i) => (
        <TaskButton key={i} icon={<PaintIcon />} label={title} />
      ))}
    </TaskGroup>
    <TaskGroup>
      <TaskButton icon={<WordpadIcon />} label="PCKCU..." />
      <TaskButton icon={<WordpadIcon />} label="문서2A..." active />
      <TaskButton icon={<WordpadIcon />} label="문서 - ..." />
    </TaskGroup>
    <div className="ml-auto flex shrink-0 items-center gap-2">
      <RingIcon height={16} />
      <svg width="16" height="16" viewBox="0 0 16 16"><rect width="16" height="16" rx="2" fill="#7a2ff0" /><path d="M5 4v8l6-4z" fill="none" stroke="#fff" strokeWidth="1.300" /></svg>
      <svg width="16" height="16" viewBox="0 0 16 16"><circle cx="8" cy="8" r="7.500" fill="#f7e51a" stroke="#222" /><path d="M5 4v3M10.500 4v3" stroke="#222" strokeWidth="1.800" /><path d="M3.500 9c2 3 7 3 9 0" stroke="#222" fill="none" /><path d="M6.500 11h3v3h-3z" fill="#e0302a" /></svg>
      <svg width="16" height="16" viewBox="0 0 16 16" fill="none" stroke="#12a7ea" strokeWidth="3"><path d="M10 2.500a5.500 5.500 0 1 0 0 11M9 8.500h5.500V15" /></svg>
      <svg width="17" height="16" viewBox="0 0 17 16" fill="#fff" stroke="#2f3e52" strokeWidth=".6"><path d="M1 5h3l4-4v14l-4-4H1z" /><path d="M10 5c1.500 2 1.500 4 0 6M12 3c2.500 3 2.500 7 0 10M14.200 1.500c3 4 3 9 0 13" fill="none" stroke="#fff" strokeWidth="1.200" /></svg>
      <time className="ml-3.5 text-xs whitespace-nowrap">오전 11:59</time>
      <button type="button" aria-label="바탕 화면 보기" className="ml-2 h-full w-3.5 border border-[#2b3645] bg-gradient-to-br from-[#a9b7c8] to-[#5c6d83]" />
    </div>
  </div>
);

const App: FC = () => (
  <div className="flex h-screen flex-col overflow-hidden font-['Open_Sans','Noto_Sans_CJK_KR',sans-serif] text-[#1e395b]">
    <TitleBar />
    <TabBar />
    <Ribbon />
    <Ruler />
    <main className="flex min-h-0 flex-1 overflow-hidden bg-gradient-to-b from-[#c5cede] to-[#dde7f3] pr-[167px] pl-[166px]">
      <div className="min-w-0 flex-1 bg-white pt-3.5 pr-[97px] pl-[95px] shadow-[0_0_6px_1px_#8f9db8]">
        <DocumentText />
      </div>
    </main>
    <StatusBar />
    <Taskbar />
  </div>
);

export default App;
